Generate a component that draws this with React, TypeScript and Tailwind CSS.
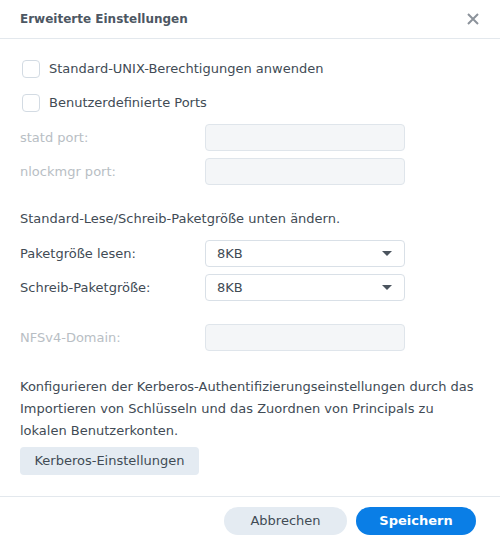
import { useState } from "react";

const Checkbox = ({ label }: { label: string }) => {
  const [checked, setChecked] = useState(false);
  return (
    <label className="flex items-center h-[18px] cursor-pointer">
      <span
        onClick={() => setChecked(!checked)}
        className="w-[18px] h-[18px] rounded-[4px] border border-[#d3dbe3] bg-white shrink-0"
      />
      <span className="ml-[9px] text-[#414b55]">{label}</span>
    </label>
  );
};

const Row = ({
  label,
  disabled,
  children,
}: {
  label: string;
  disabled?: boolean;
  children: React.ReactNode;
}) => (
  <div className="flex items-center h-[27px]">
    <span className={`w-[185px] ${disabled ? "text-[#b8bec4]" : "text-[#414b55]"}`}>
      {label}
    </span>
    {children}
  </div>
);

const DisabledInput = () => (
  <div className="w-[200px] h-[27px] rounded-[4px] border border-[#dfe5eb] bg-[#f4f6f8]" />
);

const Select = ({ value }: { value: string }) => (
  <div className="w-[200px] h-[27px] rounded-[4px] border border-[#d9e0e7] bg-white flex items-center justify-between pl-[11px] pr-[12px] text-[#414b55]">
    <span>{value}</span>
    <svg width="10" height="6" viewBox="0 0 10 6">
      <path d="M0 0 H10 L5 5 Z" fill="#4b545e" />
    </svg>
  </div>
);

export default function App() {
  return (
    <div
      className="w-[500px] h-[545px] bg-white flex flex-col text-[13px]"
      style={{ fontFamily: '"DejaVu Sans", Verdana, sans-serif' }}
    >
      <div className="h-[39px] flex items-center justify-between pl-[20px] pr-[21px] border-b border-[#e3e8ed] shrink-0">
        <span className="font-bold text-[12px] text-[#4d5763]">Erweiterte Einstellungen</span>
        <svg width="12" height="12" viewBox="0 0 12 12">
          <path d="M1 1 L11 11 M11 1 L1 11" stroke="#8c939b" strokeWidth="2" />
        </svg>
      </div>

      <div className="flex-1 px-[20px] pt-[21px]">
        <div className="pl-[2px] flex flex-col gap-[16px]">
          <Checkbox label="Standard-UNIX-Berechtigungen anwenden" />
          <Checkbox label="Benutzerdefinierte Ports" />
        </div>
        <div className="mt-[12px] flex flex-col gap-[7px]">
          <Row label="statd port:" disabled>
            <DisabledInput />
          </Row>
          <Row label="nlockmgr port:" disabled>
            <DisabledInput />
          </Row>
        </div>
        <p className="mt-[23px] text-[#414b55] leading-[22px]">
          Standard-Lese/Schreib-Paketgröße unten ändern.
        </p>
        <div className="mt-[10px] flex flex-col gap-[7px]">
          <Row label="Paketgröße lesen:">
            <Select value="8KB" />
          </Row>
          <Row label="Schreib-Paketgröße:">
            <Select value="8KB" />
          </Row>
        </div>
        <div className="mt-[23px]">
          <Row label="NFSv4-Domain:" disabled>
            <DisabledInput />
          </Row>
        </div>
        <p className="mt-[25px] text-[#414b55] leading-[22px]">
          Konfigurieren der Kerberos-Authentifizierungseinstellungen durch das Importieren von
          Schlüsseln und das Zuordnen von Principals zu lokalen Benutzerkonten.
        </p>
        <button className="mt-[5px] h-[28px] w-[179px] rounded-[4px] bg-[#e4ebf2] text-[#414b55]">
          Kerberos-Einstellungen
        </button>
      </div>

      <div className="h-[49px] border-t border-[#e3e8ed] flex items-center justify-end gap-[9px] pr-[24px] shrink-0">
        <button className="w-[123px] h-[28px] rounded-full bg-[#e4ebf2] text-[#414b55]">
          Abbrechen
        </button>
        <button className="w-[120px] h-[28px] rounded-full bg-[#0a7ee6] text-white font-bold">
          Speichern
        </button>
      </div>
    </div>
  );
}
